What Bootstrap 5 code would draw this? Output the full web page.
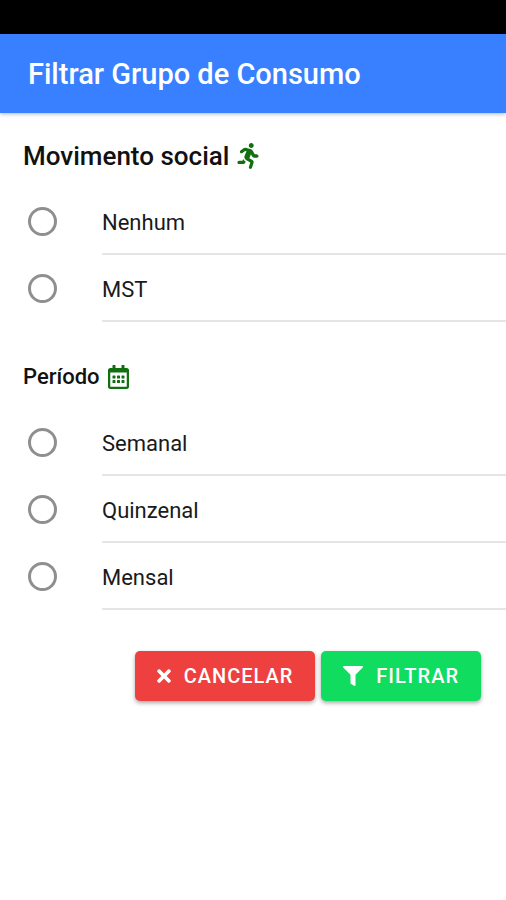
<!DOCTYPE html>
<html lang="pt-BR">
<head>
<meta charset="utf-8">
<meta name="viewport" content="width=device-width, initial-scale=1">
<title>Filtrar Grupo de Consumo</title>
<link rel="stylesheet" href="https://cdn.jsdelivr.net/npm/bootstrap@5.3.0/dist/css/bootstrap.min.css">
<style>
body { font-family: Roboto, sans-serif; font-size: 22px; line-height: 28px; color: #1a1a1a; background: #fff; }
.status-strip { height: 34px; background: #000; }
.title-bar { height: 79px; padding: 0 28px; background: #3880ff; box-shadow: 0 1px 4px rgba(0, 0, 0, .3); }
.title-bar h1 { font-size: 29px; line-height: 32px; font-weight: 500; color: #fff; }
.filter-group { padding-top: 12px; }
.filter-group + .filter-group { padding-top: 24px; }
.group-title { height: 63px; padding: 0 23px 2px; color: #111; font-weight: 500; }
.group-title h2 { font-size: 26px; line-height: 32px; font-weight: 500; }
.group-title h3 { font-size: 22px; line-height: 28px; font-weight: 500; }
.group-title svg { fill: #107010; }
.option-row { padding-left: 28px; gap: 45px; cursor: pointer; }
.option-row .form-check-input { width: 29px; height: 29px; border: 3px solid #8f8f8f; box-shadow: none; }
.option-row .form-check-input:checked { background-color: #3880ff; border-color: #3880ff; }
.option-text { height: 67px; padding-top: 4px; border-bottom: 2px solid #e5e5e5; }
.actions { padding: 41px 25px; gap: 6px; }
.actions .btn { height: 50px; padding: 0 22px; gap: 13px; border: 0; border-radius: 5px; color: #fff; font-size: 20px; line-height: 24px; font-weight: 500; box-shadow: 0 2px 4px rgba(0, 0, 0, .35); letter-spacing: 1px; }
.btn-cancel, .btn-cancel:hover { background: #ef4040; }
.btn-apply, .btn-apply:hover { background: #10dc60; }
.actions svg { fill: #fff; }
</style>
<script src="https://cdn.jsdelivr.net/npm/bootstrap@5.3.0/dist/js/bootstrap.bundle.min.js"></script>
</head>
<body>
<div class="status-strip"></div>
<header class="title-bar d-flex align-items-center position-relative">
  <h1 class="m-0">Filtrar Grupo de Consumo</h1>
</header>
<main>
  <form>
    <section class="filter-group" role="radiogroup" aria-labelledby="movimento">
      <div class="group-title d-flex align-items-center gap-2">
        <h2 class="m-0" id="movimento">Movimento social</h2>
        <svg width="22" height="26" viewBox="0 0 416 512" aria-hidden="true"><path d="M272 96c26.51 0 48-21.49 48-48S298.51 0 272 0s-48 21.49-48 48 21.49 48 48 48zM113.69 317.47l-14.8 34.52H32c-17.67 0-32 14.33-32 32s14.33 32 32 32h77.45c19.25 0 36.58-11.44 44.11-29.09l8.79-20.52-10.67-6.3c-17.32-10.23-30.06-25.37-37.99-42.61zM384 223.99h-44.03l-26.06-53.25c-12.5-25.55-35.45-44.23-61.78-50.94l-71.08-21.14c-28.3-6.8-57.77-.55-80.84 17.14l-39.67 30.41c-14.03 10.75-16.69 30.83-5.94 44.86s30.84 16.69 44.86 5.94l39.67-30.41c7.67-5.89 17.44-8 25.27-6.14l14.7 4.37-37.46 87.39c-12.62 29.48-1.31 64.01 26.3 80.31l84.98 50.17-27.47 87.73c-5.28 16.86 4.11 34.82 20.97 40.1 3.18.99 6.4 1.47 9.56 1.47 13.63 0 26.27-8.76 30.54-22.44l31.61-100.94c5.64-20.64-3.24-42.2-21.8-53.29l-61.24-36.14 31.3-78.28 20.27 41.43c8 16.34 24.92 26.91 43.11 26.91H384c17.67 0 32-14.33 32-32s-14.33-32-32-32z"/></svg>
      </div>
      <label class="option-row d-flex align-items-center"><input class="form-check-input flex-shrink-0 m-0" type="radio" name="movimento" value="nenhum"><span class="option-text d-flex align-items-center flex-grow-1">Nenhum</span></label>
      <label class="option-row d-flex align-items-center"><input class="form-check-input flex-shrink-0 m-0" type="radio" name="movimento" value="mst"><span class="option-text d-flex align-items-center flex-grow-1">MST</span></label>
    </section>
    <section class="filter-group" role="radiogroup" aria-labelledby="periodo">
      <div class="group-title d-flex align-items-center gap-2">
        <h3 class="m-0" id="periodo">Período</h3>
        <svg width="21" height="24" viewBox="0 0 448 512" aria-hidden="true"><path d="M148 288h-40c-6.600 0-12-5.400-12-12v-40c0-6.600 5.400-12 12-12h40c6.600 0 12 5.400 12 12v40c0 6.600-5.400 12-12 12zm108-12v-40c0-6.600-5.400-12-12-12h-40c-6.600 0-12 5.400-12 12v40c0 6.600 5.400 12 12 12h40c6.600 0 12-5.400 12-12zm96 0v-40c0-6.600-5.400-12-12-12h-40c-6.600 0-12 5.400-12 12v40c0 6.600 5.400 12 12 12h40c6.600 0 12-5.400 12-12zm-96 96v-40c0-6.600-5.400-12-12-12h-40c-6.600 0-12 5.400-12 12v40c0 6.600 5.400 12 12 12h40c6.600 0 12-5.400 12-12zm-96 0v-40c0-6.600-5.400-12-12-12h-40c-6.600 0-12 5.400-12 12v40c0 6.600 5.400 12 12 12h40c6.600 0 12-5.400 12-12zm192 0v-40c0-6.600-5.400-12-12-12h-40c-6.600 0-12 5.400-12 12v40c0 6.600 5.400 12 12 12h40c6.600 0 12-5.400 12-12zm96-260v352c0 26.500-21.500 48-48 48H48c-26.500 0-48-21.500-48-48V112c0-26.500 21.500-48 48-48h48V12c0-6.600 5.400-12 12-12h40c6.600 0 12 5.400 12 12v52h128V12c0-6.600 5.400-12 12-12h40c6.600 0 12 5.400 12 12v52h48c26.500 0 48 21.500 48 48zm-48 346V160H48v298c0 3.300 2.700 6 6 6h340c3.300 0 6-2.700 6-6z"/></svg>
      </div>
      <label class="option-row d-flex align-items-center"><input class="form-check-input flex-shrink-0 m-0" type="radio" name="periodo" value="semanal"><span class="option-text d-flex align-items-center flex-grow-1">Semanal</span></label>
      <label class="option-row d-flex align-items-center"><input class="form-check-input flex-shrink-0 m-0" type="radio" name="periodo" value="quinzenal"><span class="option-text d-flex align-items-center flex-grow-1">Quinzenal</span></label>
      <label class="option-row d-flex align-items-center"><input class="form-check-input flex-shrink-0 m-0" type="radio" name="periodo" value="mensal"><span class="option-text d-flex align-items-center flex-grow-1">Mensal</span></label>
    </section>
    <div class="actions d-flex justify-content-end">
      <button type="button" class="btn btn-cancel d-inline-flex align-items-center"><svg width="14" height="20" viewBox="0 0 352 512" aria-hidden="true"><path d="M242.72 256l100.070-100.070c12.280-12.280 12.280-32.190 0-44.480l-22.240-22.240c-12.280-12.280-32.190-12.280-44.480 0L176 189.280 75.930 89.210c-12.280-12.280-32.190-12.280-44.480 0L9.210 111.450c-12.280 12.280-12.280 32.190 0 44.480L109.280 256 9.210 356.070c-12.280 12.280-12.280 32.190 0 44.480l22.240 22.240c12.280 12.280 32.200 12.280 44.480 0L176 322.720l100.070 100.070c12.280 12.280 32.200 12.280 44.480 0l22.240-22.240c12.280-12.280 12.280-32.190 0-44.480L242.720 256z"/></svg><span>CANCELAR</span></button>
      <button type="submit" class="btn btn-apply d-inline-flex align-items-center"><svg width="20" height="20" viewBox="0 0 512 512" aria-hidden="true"><path d="M487.976 0H24.028C2.710 0-8.047 25.866 7.058 40.971L192 225.941V432c0 7.831 3.821 15.170 10.237 19.662l80 55.980C298.020 518.690 320 507.493 320 487.980V225.941l184.947-184.970C520.021 25.896 509.338 0 487.976 0z"/></svg><span>FILTRAR</span></button>
    </div>
  </form>
</main>
</body>
</html>
